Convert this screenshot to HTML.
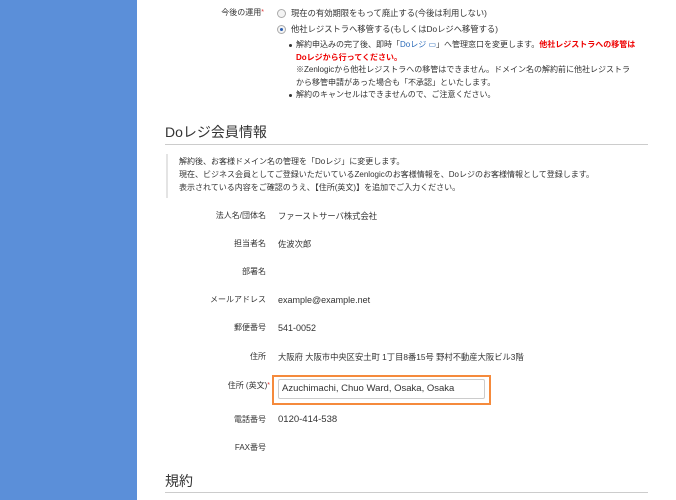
<!DOCTYPE html>
<html><head><meta charset="utf-8"><style>
body{margin:0;width:676px;height:500px;overflow:hidden;background:#fff;font-family:"Liberation Sans","Noto Sans CJK JP",sans-serif;color:#333;font-size:8px;position:relative}
.side{position:absolute;left:0;top:0;width:137px;height:500px;background:#5b8fd9}
.a{position:absolute;white-space:nowrap;line-height:12px}
.lab{position:absolute;right:410px;white-space:nowrap;line-height:12px;text-align:right}
.val{position:absolute;left:278px;white-space:nowrap;line-height:12px;font-size:8.3px}
.req{color:#d33;font-size:7px;vertical-align:top}
.radio{position:absolute;width:7px;height:7px;border:1px solid #aaa;border-radius:50%;background:#f4f4f4}
.dot{position:absolute;width:3px;height:3px;background:#333;border-radius:50%;left:289px}
h2{position:absolute;margin:0;font-weight:normal;font-size:14px;left:165px;color:#333}
.hr{position:absolute;left:165px;width:483px;height:1px;background:#ccc}
</style></head><body>
<div class="side"></div>
<div class="lab" style="top:7px;right:412px">今後の運用<span class="req">*</span></div>
<div class="radio" style="left:277px;top:9px"></div>
<div class="a" style="left:291px;top:7px;font-size:8.3px">現在の有効期限をもって廃止する(今後は利用しない)</div>
<div class="radio" style="left:277px;top:25px"><div style="position:absolute;left:2px;top:2px;width:3px;height:3px;border-radius:50%;background:#2a5db0"></div></div>
<div class="a" style="left:291px;top:23px;font-size:8.3px">他社レジストラへ移管する(もしくはDoレジへ移管する)</div>
<div class="dot" style="top:44px"></div>
<div class="a" style="left:296px;top:39px">解約申込みの完了後、即時「<span style="color:#2a6ab8">Doレジ ▭</span>」へ管理窓口を変更します。<b style="color:#e00">他社レジストラへの移管は</b></div>
<div class="a" style="left:296px;top:51.5px"><b style="color:#e00">Doレジから行ってください。</b></div>
<div class="a" style="left:296px;top:64px">※Zenlogicから他社レジストラへの移管はできません。ドメイン名の解約前に他社レジストラ</div>
<div class="a" style="left:296px;top:76.5px">から移管申請があった場合も「不承認」といたします。</div>
<div class="dot" style="top:94px"></div>
<div class="a" style="left:296px;top:89px">解約のキャンセルはできませんので、ご注意ください。</div>

<h2 style="top:122px">Doレジ会員情報</h2>
<div class="hr" style="top:144px"></div>
<div style="position:absolute;left:166px;top:154px;width:2px;height:44px;background:#e4e4e4"></div>
<div class="a" style="left:179px;top:156px">解約後、お客様ドメイン名の管理を「Doレジ」に変更します。</div>
<div class="a" style="left:179px;top:169px">現在、ビジネス会員としてご登録いただいているZenlogicのお客様情報を、Doレジのお客様情報として登録します。</div>
<div class="a" style="left:179px;top:182px">表示されている内容をご確認のうえ、【住所(英文)】を追加でご入力ください。</div>

<div class="lab" style="top:210px">法人名/団体名</div><div class="val" style="top:210px">ファーストサーバ株式会社</div>
<div class="lab" style="top:238px">担当者名</div><div class="val" style="top:238px">佐波次郎</div>
<div class="lab" style="top:266px">部署名</div>
<div class="lab" style="top:294px">メールアドレス</div><div class="val" style="top:294px;font-size:9px">example@example.net</div>
<div class="lab" style="top:322px">郵便番号</div><div class="val" style="top:322px;font-size:9px">541-0052</div>
<div class="lab" style="top:351px">住所</div><div class="val" style="top:351px">大阪府 大阪市中央区安土町 1丁目8番15号 野村不動産大阪ビル3階</div>
<div class="lab" style="top:380px;right:406px">住所 (英文)<span class="req">*</span></div>
<div style="position:absolute;left:272px;top:375px;width:215px;height:26px;border:2px solid #f58a3c"></div>
<div style="position:absolute;left:278px;top:379px;width:207px;height:20px;border:1px solid #ccc;border-radius:2px;box-sizing:border-box"></div>
<div class="a" style="left:282px;top:383px;font-size:9.5px">Azuchimachi, Chuo Ward, Osaka, Osaka</div>
<div class="lab" style="top:414px">電話番号</div><div class="val" style="top:414px;font-size:9.5px">0120-414-538</div>
<div class="lab" style="top:442px">FAX番号</div>
<h2 style="top:471px">規約</h2>
<div class="hr" style="top:492px"></div>
</body></html>
